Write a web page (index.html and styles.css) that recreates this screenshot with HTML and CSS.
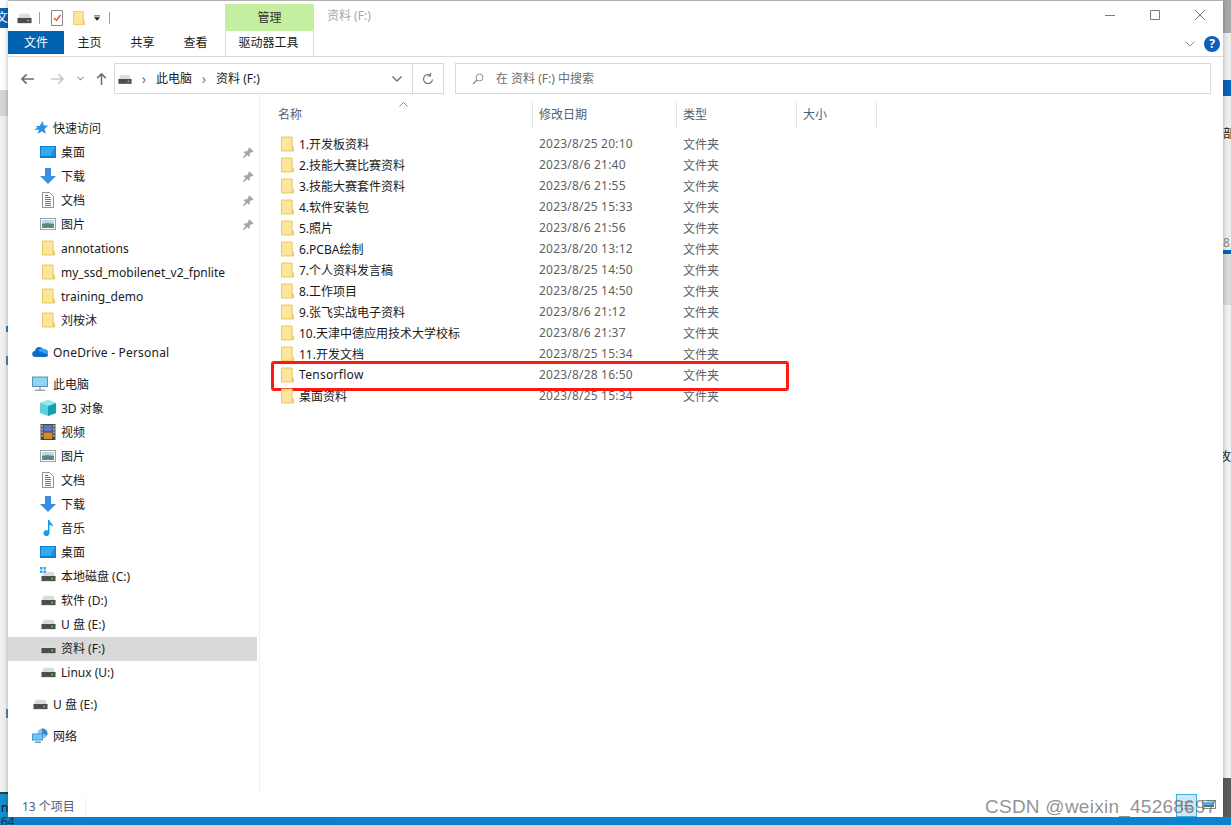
FILE: index.html
```html
<!DOCTYPE html>
<html lang="zh-CN">

<head>
    <meta charset="UTF-8">
    <title>资料 (F:)</title>
    <link rel="stylesheet" href="styles.css">
</head>

<body>
    <svg class="sprites" width="0" height="0">
        <symbol id="i-folder" viewBox="0 0 14 16">
            <path d="M.5.5h11.500v11h1.500v4H.5z" fill="#fde69b" stroke="#eac452"/>
            <path d="M12 11.500v4" stroke="#eac452"/>
        </symbol>
        <symbol id="i-drive" viewBox="0 0 16 12">
            <path d="M3 1.500h10l2.500 5.500H.5z" fill="#dcdcdc"/>
            <rect x=".5" y="6" width="15" height="5.500" fill="#4d4d4d"/>
            <rect x="11" y="8" width="2" height="1.500" fill="#5fe06a"/>
        </symbol>
        <symbol id="i-desktop" viewBox="0 0 16 12">
            <rect width="16" height="12" fill="#0a7fd6"/>
            <path d="M1 1h14v9H1z" fill="#39a7f0"/>
            <path d="M10 10l5-9v9z" fill="#1b8fe3"/>
        </symbol>
        <symbol id="i-down" viewBox="0 0 16 16">
            <path d="M5 0h6v8h5l-8 8-8-8h5z" fill="#3a8fe0"/>
        </symbol>
        <symbol id="i-doc" viewBox="0 0 12 16">
            <path d="M.5.5h7l4 4v11H.5z" fill="#fff" stroke="#8f8f8f"/>
            <path d="M6 3.500H3M8.500 5.500H3M9 7.500H3M9 9.500H3M9 11.500H3M9 13.500H3" stroke="#1f8fce"/>
        </symbol>
        <symbol id="i-pic" viewBox="0 0 16 12">
            <rect x=".5" y=".5" width="15" height="11" fill="#fff" stroke="#a0a0a0"/>
            <rect x="2" y="2" width="12" height="4" fill="#b9d6ee"/>
            <path d="M2 6l5-1 7 1v4H2z" fill="#5f8a78"/>
        </symbol>
        <symbol id="i-pin" viewBox="0 0 11 11">
            <path d="M6.500.5l4 4-1 1-1-.5-2 2 .3 2-1 .8-1.800-1.800L1 11 0 10l2.500-3L.8 5.300l.8-1 2 .3 2-2-.5-1z" fill="#9fa5ab"/>
        </symbol>
    </svg>

    <div class="edge edge-left">
        <span class="edge-tab">文</span>
        <span class="edge-mark mark-a"></span>
        <span class="edge-mark mark-b"></span>
        <span class="edge-mark mark-c"></span>
        <span class="edge-frag frag-n">n</span>
    </div>
    <div class="edge edge-right">
        <span class="edge-app"></span>
        <span class="edge-frag frag-bu">部</span>
        <span class="edge-frag frag-8">8</span>
        <span class="edge-frag frag-gong">攻</span>
    </div>

    <div class="window">
        <header class="titlebar">
            <div class="quick">
                <svg class="ic-drive"><use href="#i-drive"/></svg>
                <span class="quick-sep"></span>
                <svg class="ic-check" viewBox="0 0 12 16">
                    <path d="M.5.5h11v15H.5z" fill="#fff" stroke="#8a8a8a"/>
                    <path d="M3 8l2.500 2.500L9.500 5" fill="none" stroke="#e0552b" stroke-width="1.400"/>
                </svg>
                <svg class="ic-folder"><use href="#i-folder"/></svg>
                <svg class="ic-more" viewBox="0 0 8 6">
                    <path d="M0 0h7v1H0zM0 2h7L3.500 6z" fill="#222"/>
                </svg>
                <span class="quick-sep"></span>
            </div>
            <div class="tool-tab">管理</div>
            <div class="title">资料 (F:)</div>
            <div class="controls">
                <svg viewBox="0 0 10 10"><path d="M0 5.500h10" stroke="#7a7a7a"/></svg>
                <svg viewBox="0 0 10 10"><path d="M.5.500h9v9h-9z" fill="none" stroke="#7a7a7a"/></svg>
                <svg viewBox="0 0 10 10"><path d="M0 0l10 10M10 0L0 10" stroke="#7a7a7a"/></svg>
            </div>
        </header>

        <nav class="ribbon">
            <div class="rtab rtab-file">文件</div>
            <div class="rtab">主页</div>
            <div class="rtab">共享</div>
            <div class="rtab">查看</div>
            <div class="rtab rtab-tool">驱动器工具</div>
            <svg class="collapse" viewBox="0 0 10 6"><path d="M.5.500L5 5 9.500.500" fill="none" stroke="#8a8a8a"/></svg>
            <span class="help">?</span>
        </nav>

        <div class="addressbar">
            <div class="arrows">
                <svg viewBox="0 0 14 12"><path d="M6 1L1 6l5 5M1 6h13" fill="none" stroke="#6e6e6e" stroke-width="1.800"/></svg>
                <svg viewBox="0 0 14 12"><path d="M8 1l5 5-5 5M13 6H0" fill="none" stroke="#c8c8c8" stroke-width="1.800"/></svg>
                <svg class="small" viewBox="0 0 8 5"><path d="M.5.500L4 4 7.500.500" fill="none" stroke="#8a8a8a" stroke-width="1.200"/></svg>
                <svg viewBox="0 0 12 14"><path d="M1 6l5-5 5 5M6 1v13" fill="none" stroke="#6e6e6e" stroke-width="1.800"/></svg>
            </div>
            <div class="path">
                <svg class="ic-drive"><use href="#i-drive"/></svg>
                <span class="crumb-sep">›</span>
                <span class="crumb">此电脑</span>
                <span class="crumb-sep">›</span>
                <span class="crumb">资料 (F:)</span>
                <svg class="path-drop" viewBox="0 0 10 6"><path d="M.5.500L5 5 9.500.500" fill="none" stroke="#6e6e6e" stroke-width="1.400"/></svg>
                <span class="refresh">
                    <svg viewBox="0 0 12 12"><path d="M10.500 6.500A4.500 4.500 0 1 1 8.500 2.300M8.500 0v3h-3" fill="none" stroke="#6e6e6e" stroke-width="1.100"/></svg>
                </span>
            </div>
            <div class="search">
                <svg viewBox="0 0 12 12"><circle cx="7.500" cy="4.500" r="3.500" fill="none" stroke="#8a8a8a"/><path d="M5 7l-4 4" stroke="#8a8a8a" stroke-width="1.300"/></svg>
                <span class="crumb">在 资料 (F:) 中搜索</span>
            </div>
        </div>

        <div class="main">
            <aside class="sidebar">
                <div class="nav-row nav-top nav-first">
                    <svg class="nav-ic" viewBox="0 0 14 14"><path d="M8.500 0l1.300 4.500H14L10.500 8l1.300 5-3.800-2.800L3.500 13 5 8.500 0 9l3.500-2.500L1.500 5h4.200z" fill="#2f8fe0"/></svg>
                    <span>快速访问</span>
                </div>
                <div class="nav-row"><svg class="nav-ic wide"><use href="#i-desktop"/></svg><span class="grow">桌面</span><svg class="pin"><use href="#i-pin"/></svg></div>
                <div class="nav-row"><svg class="nav-ic"><use href="#i-down"/></svg><span class="grow">下载</span><svg class="pin"><use href="#i-pin"/></svg></div>
                <div class="nav-row"><svg class="nav-ic doc"><use href="#i-doc"/></svg><span class="grow">文档</span><svg class="pin"><use href="#i-pin"/></svg></div>
                <div class="nav-row"><svg class="nav-ic wide"><use href="#i-pic"/></svg><span class="grow">图片</span><svg class="pin"><use href="#i-pin"/></svg></div>
                <div class="nav-row"><svg class="nav-ic folder"><use href="#i-folder"/></svg><span>annotations</span></div>
                <div class="nav-row"><svg class="nav-ic folder"><use href="#i-folder"/></svg><span>my_ssd_mobilenet_v2_fpnlite</span></div>
                <div class="nav-row"><svg class="nav-ic folder"><use href="#i-folder"/></svg><span>training_demo</span></div>
                <div class="nav-row"><svg class="nav-ic folder"><use href="#i-folder"/></svg><span>刘桉沐</span></div>

                <div class="nav-row nav-top nav-gap">
                    <svg class="nav-ic" viewBox="0 0 16 10"><path d="M3.500 10a3 3 0 0 1-.5-6 4.500 4.500 0 0 1 8.500-1.500A3.800 3.800 0 0 1 16 7.500 2.500 2.500 0 0 1 13.500 10z" fill="#0f6cc4"/><path d="M6 3.500a4 4 0 0 1 5.500-1A3.800 3.800 0 0 1 16 7.500L9 5z" fill="#3aa0ea"/></svg>
                    <span class="spaced">OneDrive - Personal</span>
                </div>

                <div class="nav-row nav-top nav-gap">
                    <svg class="nav-ic" viewBox="0 0 16 15"><rect width="16" height="10.500" fill="#5f8fb5"/><rect x="1" y="1" width="14" height="8.500" fill="#8fd4f5"/><path d="M7 10.500h2V13H7z" fill="#b4bcc2"/><path d="M3 13h10v1.500H3z" fill="#9aa4ab"/></svg>
                    <span>此电脑</span>
                </div>
                <div class="nav-row">
                    <svg class="nav-ic" viewBox="0 0 16 16"><path d="M8 0l8 3v10l-8 3-8-3V3z" fill="#58d3dc"/><path d="M8 6v10l8-3V3z" fill="#159fb0"/><path d="M8 6L0 3l8-3 8 3z" fill="#93e6ea"/></svg>
                    <span>3D 对象</span>
                </div>
                <div class="nav-row">
                    <svg class="nav-ic" viewBox="0 0 14 15"><rect width="14" height="15" fill="#4a4a4a"/><rect x="3" y="1" width="8" height="6" fill="#5a7ac8"/><rect x="3" y="8" width="8" height="6" fill="#d88a2a"/><path d="M1 1h1v2H1zM1 4h1v2H1zM1 7h1v2H1zM1 10h1v2H1zM12 1h1v2h-1zM12 4h1v2h-1zM12 7h1v2h-1zM12 10h1v2h-1z" fill="#ddd"/></svg>
                    <span>视频</span>
                </div>
                <div class="nav-row"><svg class="nav-ic wide"><use href="#i-pic"/></svg><span>图片</span></div>
                <div class="nav-row"><svg class="nav-ic doc"><use href="#i-doc"/></svg><span>文档</span></div>
                <div class="nav-row"><svg class="nav-ic"><use href="#i-down"/></svg><span>下载</span></div>
                <div class="nav-row">
                    <svg class="nav-ic" viewBox="0 0 12 16"><path d="M6 0h1.500c.3 3 4 3.500 3 7C10 5.500 8.500 5 7.500 5v8a3 3 0 1 1-1.500-2.500z" fill="#1b9be8"/></svg>
                    <span>音乐</span>
                </div>
                <div class="nav-row"><svg class="nav-ic wide"><use href="#i-desktop"/></svg><span>桌面</span></div>
                <div class="nav-row">
                    <span class="sys-drive">
                        <svg class="win-flag" viewBox="0 0 6 6"><path d="M0 0h2.500v2.500H0zM3.500 0H6v2.500H3.500zM0 3.500h2.500V6H0zM3.500 3.500H6V6H3.500z" fill="#29a8ea"/></svg>
                        <svg class="nav-ic drive"><use href="#i-drive"/></svg>
                    </span>
                    <span>本地磁盘 (C:)</span>
                </div>
                <div class="nav-row"><svg class="nav-ic drive"><use href="#i-drive"/></svg><span>软件 (D:)</span></div>
                <div class="nav-row"><svg class="nav-ic drive"><use href="#i-drive"/></svg><span>U 盘 (E:)</span></div>
                <div class="nav-row selected"><svg class="nav-ic drive"><use href="#i-drive"/></svg><span>资料 (F:)</span></div>
                <div class="nav-row"><svg class="nav-ic drive"><use href="#i-drive"/></svg><span>Linux (U:)</span></div>

                <div class="nav-row nav-top nav-gap"><svg class="nav-ic drive"><use href="#i-drive"/></svg><span>U 盘 (E:)</span></div>
                <div class="nav-row nav-top nav-gap nav-net">
                    <svg class="nav-ic" viewBox="0 0 16 15"><circle cx="10.500" cy="5" r="5" fill="#8fc0e6"/><path d="M10 0a5 5 0 0 1 5 7l-5-2z" fill="#3f86c8"/><rect y="5" width="11" height="7" fill="#3d9ae0"/><rect x="1" y="6" width="9" height="5" fill="#74c3f2"/><path d="M3 13h6v1.500H3z" fill="#7a98b0"/></svg>
                    <span>网络</span>
                </div>
            </aside>

            <section class="files">
                <div class="file-head">
                    <svg class="sort" viewBox="0 0 9 5"><path d="M.5 4.500L4.500.500l4 4" fill="none" stroke="#8a8a8a"/></svg>
                    <div class="col-name">名称</div>
                    <div class="col-date">修改日期</div>
                    <div class="col-type">类型</div>
                    <div class="col-size">大小</div>
                </div>
                <div class="file-list">
                    <div class="file"><svg><use href="#i-folder"/></svg><span class="f-name">1.开发板资料</span><span class="f-date">2023/8/25 20:10</span><span class="f-type">文件夹</span></div>
                    <div class="file"><svg><use href="#i-folder"/></svg><span class="f-name">2.技能大赛比赛资料</span><span class="f-date">2023/8/6 21:40</span><span class="f-type">文件夹</span></div>
                    <div class="file"><svg><use href="#i-folder"/></svg><span class="f-name">3.技能大赛套件资料</span><span class="f-date">2023/8/6 21:55</span><span class="f-type">文件夹</span></div>
                    <div class="file"><svg><use href="#i-folder"/></svg><span class="f-name">4.软件安装包</span><span class="f-date">2023/8/25 15:33</span><span class="f-type">文件夹</span></div>
                    <div class="file"><svg><use href="#i-folder"/></svg><span class="f-name">5.照片</span><span class="f-date">2023/8/6 21:56</span><span class="f-type">文件夹</span></div>
                    <div class="file"><svg><use href="#i-folder"/></svg><span class="f-name">6.PCBA绘制</span><span class="f-date">2023/8/20 13:12</span><span class="f-type">文件夹</span></div>
                    <div class="file"><svg><use href="#i-folder"/></svg><span class="f-name">7.个人资料发言稿</span><span class="f-date">2023/8/25 14:50</span><span class="f-type">文件夹</span></div>
                    <div class="file"><svg><use href="#i-folder"/></svg><span class="f-name">8.工作项目</span><span class="f-date">2023/8/25 14:50</span><span class="f-type">文件夹</span></div>
                    <div class="file"><svg><use href="#i-folder"/></svg><span class="f-name">9.张飞实战电子资料</span><span class="f-date">2023/8/6 21:12</span><span class="f-type">文件夹</span></div>
                    <div class="file"><svg><use href="#i-folder"/></svg><span class="f-name">10.天津中德应用技术大学校标</span><span class="f-date">2023/8/6 21:37</span><span class="f-type">文件夹</span></div>
                    <div class="file"><svg><use href="#i-folder"/></svg><span class="f-name">11.开发文档</span><span class="f-date">2023/8/25 15:34</span><span class="f-type">文件夹</span></div>
                    <div class="file marked"><svg><use href="#i-folder"/></svg><span class="f-name">Tensorflow</span><span class="f-date">2023/8/28 16:50</span><span class="f-type">文件夹</span></div>
                    <div class="file"><svg><use href="#i-folder"/></svg><span class="f-name">桌面资料</span><span class="f-date">2023/8/25 15:34</span><span class="f-type">文件夹</span></div>
                </div>
            </section>
        </div>

        <footer class="statusbar">
            <span class="count">13 个项目</span>
            <span class="view-btn">
                <svg viewBox="0 0 11 9"><path d="M0 1h2M0 4.500h2M0 8h2" stroke="#c0453a"/><path d="M3.500 1H11M3.500 4.500H11M3.500 8H11" stroke="#777"/></svg>
            </span>
            <svg class="view-large" viewBox="0 0 14 9"><rect x=".5" y=".5" width="13" height="8" fill="#fff" stroke="#8a8a8a"/><rect x="2" y="2" width="10" height="3" fill="#5aaee8"/><rect x="2" y="5" width="10" height="2" fill="#4c7a58"/></svg>
        </footer>
    </div>

    <div class="taskbar"><span class="taskbar-frag">64</span></div>
    <div class="watermark">CSDN @weixin_45268697</div>
</body>

</html>
```

FILE: styles.css
```css
* {
    box-sizing: border-box;
    margin: 0;
    padding: 0;
    font-family: "Noto Sans", "Noto Sans CJK SC", sans-serif;
}

body {
    position: relative;
    width: 1231px;
    height: 825px;
    overflow: hidden;
    background: #c9c9c9;
    font-size: 12px;
    color: #1a1a1a;
}

.sprites {
    position: absolute;
}

svg {
    display: block;
    flex-shrink: 0;
}

/* bits of the desktop around the window */
.edge {
    position: absolute;
    top: 0;
    height: 825px;
    width: 8px;
    overflow: hidden;
}

.edge-left {
    left: 0;
    background: linear-gradient(to bottom, #fff 0, #fff 90px, #d6d6d6 90px, #d6d6d6 116px, #f0f0f0 116px, #f0f0f0 792px, #2d3a44 792px, #2d3a44 794px, #1590cf 794px);
}

.edge-tab {
    display: block;
    height: 20px;
    margin-top: 8px;
    background: #0b63b3;
    color: #fff;
    text-indent: -4px;
    overflow: hidden;
}

.edge-right {
    right: 0;
    background: linear-gradient(to bottom, #a9a9a9 0, #a9a9a9 33px, #eee 33px, #eee 250px, #0a63bd 250px, #0a63bd 254px, #dadada 254px, #dadada 305px, #f1f1f1 305px, #f1f1f1 778px, #5c5c5c 778px);
}

.edge-app {
    display: block;
    width: 8px;
    height: 16px;
    margin-top: 80px;
    background: #0a63bd;
}

.edge-mark {
    position: absolute;
    left: 6px;
    width: 2px;
    height: 6px;
    background: #2f7fc4;
}

.mark-a {
    top: 326px;
}

.mark-b {
    top: 356px;
    height: 9px;
    background: #4f86a8;
}

.mark-c {
    top: 709px;
    height: 9px;
    background: #4f86a8;
}

.edge-frag {
    position: absolute;
    left: 0;
    width: 8px;
    overflow: hidden;
    line-height: 16px;
}

.frag-n {
    top: 801px;
    line-height: 14px;
    text-indent: 1px;
}

.frag-bu {
    top: 126px;
}

.frag-8 {
    top: 235px;
    color: #888;
}

.frag-gong {
    top: 449px;
    text-indent: -4px;
}

.window {
    position: absolute;
    left: 8px;
    top: 1px;
    width: 1215px;
    height: 816px;
    display: flex;
    flex-direction: column;
    background: #fff;
    box-shadow: 0 0 5px rgba(0, 0, 0, 0.3);
}

.titlebar {
    display: flex;
    height: 30px;
    flex-shrink: 0;
}

.quick {
    display: flex;
    align-items: center;
    width: 217px;
    padding: 3px 0 0 9px;
}

.ic-drive {
    width: 15px;
    height: 12px;
}

.quick-sep {
    width: 1px;
    height: 12px;
    margin: 0 11px 0 7px;
    background: #a0a0a0;
}

.ic-check {
    width: 12px;
    height: 16px;
    margin-right: 10px;
}

.ic-folder {
    width: 12px;
    height: 16px;
    margin-right: 9px;
}

.ic-more {
    width: 7px;
    height: 6px;
    margin-right: 1px;
}

.tool-tab {
    width: 89px;
    margin-top: 3px;
    line-height: 27px;
    text-align: center;
    background: #c4efa0;
    color: #333;
}

.title {
    flex: 1;
    padding: 5px 0 0 13px;
    color: #a8a8a8;
}

.controls {
    display: flex;
    gap: 35px;
    padding: 9px 18px 0 0;
}

.controls svg {
    width: 10px;
    height: 10px;
}

.ribbon {
    display: flex;
    height: 26px;
    flex-shrink: 0;
    align-items: flex-start;
    border-bottom: 1px solid #dadada;
}

.rtab {
    width: 53px;
    height: 23px;
    line-height: 24px;
    text-align: center;
}

.rtab-file {
    width: 56px;
    margin-right: -1px;
    background: #0063b1;
    color: #fff;
}

.rtab-tool {
    width: 89px;
    margin-left: 3px;
    padding-right: 2px;
    height: 25px;
    background: #fff;
    border-left: 1px solid #dadada;
    border-right: 1px solid #dadada;
}

.collapse {
    width: 10px;
    height: 6px;
    margin: 10px 0 0 871px;
}

.help {
    width: 16px;
    height: 16px;
    margin: 5px 0 0 9px;
    border-radius: 50%;
    background: #0a62b8;
    color: #fff;
    font-size: 12px;
    font-weight: 700;
    line-height: 16px;
    text-align: center;
}

.addressbar {
    display: flex;
    align-items: center;
    height: 31px;
    margin-top: 6px;
    flex-shrink: 0;
}

.arrows {
    display: flex;
    align-items: center;
    width: 106px;
    padding-left: 13px;
    gap: 17px;
}

.arrows svg {
    width: 13px;
    height: 12px;
}

.arrows svg.small {
    width: 7px;
    height: 5px;
    margin: 0 -6px 0 -4px;
}

.path {
    display: flex;
    align-items: center;
    width: 330px;
    height: 31px;
    padding-left: 3px;
    border: 1px solid #d9d9d9;
}

.path .ic-drive {
    width: 14px;
}

.crumb {
    padding-bottom: 2px;
}

.path .crumb-sep {
    width: 24px;
    color: #777;
    font-size: 14px;
    text-align: center;
}

.path-drop {
    width: 10px;
    height: 6px;
    margin-left: auto;
    margin-right: 10px;
}

.refresh {
    display: flex;
    align-items: center;
    justify-content: center;
    width: 31px;
    height: 29px;
    border-left: 1px solid #d9d9d9;
}

.refresh svg {
    width: 12px;
    height: 12px;
}

.search {
    display: flex;
    align-items: center;
    gap: 12px;
    width: 756px;
    height: 31px;
    margin-left: 11px;
    padding-left: 16px;
    border: 1px solid #d9d9d9;
    color: #6d6d6d;
}

.search svg {
    width: 12px;
    height: 12px;
}

.main {
    display: flex;
    flex: 1;
    min-height: 0;
}

.sidebar {
    width: 252px;
    padding: 22px 0 0;
    border-right: 1px solid #f0f0f0;
}

.nav-row {
    display: flex;
    align-items: center;
    height: 24px;
    width: 249px;
    padding: 0 3px 0 32px;
}

.nav-top {
    padding-left: 24px;
}

.nav-first .nav-ic {
    margin-left: 2px;
    margin-right: 5px;
    width: 14px;
    height: 14px;
}

.nav-gap {
    margin-top: 8px;
}

.spaced {
    letter-spacing: 0.2px;
}

.selected {
    background: linear-gradient(to bottom, #fff 1px, #d9d9d9 1px);
    box-shadow: 0 1px 0 #d9d9d9;
}

.nav-ic {
    width: 16px;
    height: 16px;
    margin-right: 5px;
}

.nav-ic.wide {
    height: 12px;
}

.nav-ic.doc {
    width: 12px;
    padding: 0;
    margin: 0 7px 0 2px;
}

.nav-ic.folder {
    width: 13px;
    height: 16px;
    margin: 0 6px 0 2px;
}

.nav-ic.drive {
    width: 15px;
    height: 12px;
    margin: 0 5px 0 1px;
}

.sys-drive {
    position: relative;
    display: block;
}

.win-flag {
    position: absolute;
    left: 0;
    top: -3px;
    width: 6px;
    height: 6px;
}

.grow {
    flex: 1;
}

.pin {
    width: 11px;
    height: 11px;
}

.files {
    flex: 1;
}

.file-head {
    position: relative;
    display: flex;
    height: 27px;
    margin-top: 7px;
    line-height: 27px;
    color: #4c607a;
}

.file-head > div {
    height: 27px;
    padding-left: 5px;
    border-right: 1px solid #e5e5e5;
}

.sort {
    position: absolute;
    left: 139px;
    top: 1px;
    width: 9px;
    height: 5px;
}

.col-name {
    width: 273px;
    padding-left: 18px !important;
}

.col-date {
    width: 144px;
    padding-left: 6px !important;
}

.col-type {
    width: 120px;
    padding-left: 6px !important;
}

.col-size {
    width: 80px;
    padding-left: 6px !important;
}

.file-list {
    padding-top: 5px;
}

.file {
    position: relative;
    display: flex;
    align-items: center;
    height: 21px;
    padding-left: 21px;
}

.file svg {
    width: 13px;
    height: 16px;
    margin-right: 5px;
}

.f-name {
    width: 240px;
}

.f-date {
    width: 144px;
    color: #5f5f5f;
    letter-spacing: 0.2px;
}

.f-type {
    color: #5f5f5f;
}

.marked .f-name {
    letter-spacing: 0.3px;
}

/* red box somebody drew on the screenshot */
.marked::after {
    content: "";
    position: absolute;
    box-sizing: border-box;
    left: 11px;
    top: -3px;
    width: 518px;
    height: 30px;
    border: 3px solid #ff1a10;
    border-radius: 3px;
}

.statusbar {
    position: relative;
    display: flex;
    align-items: center;
    height: 23px;
    flex-shrink: 0;
    padding-left: 14px;
    color: #4c607a;
}

.count {
    padding-right: 10px;
    border-right: 1px solid #f0f0f0;
}

.view-btn {
    position: absolute;
    left: 1168px;
    top: 0;
    display: flex;
    align-items: center;
    justify-content: center;
    width: 21px;
    height: 23px;
    background: #cce8f7;
    border: 1px solid #3fb0e4;
}

.view-btn svg {
    width: 11px;
    height: 9px;
}

.view-large {
    position: absolute;
    left: 1194px;
    top: 6px;
    width: 14px;
    height: 9px;
}

.taskbar {
    position: absolute;
    left: 0;
    bottom: 0;
    width: 1231px;
    height: 8px;
    overflow: hidden;
    background: linear-gradient(to right, #0a7fc8, #0a84d0);
}

.taskbar-frag {
    display: block;
    padding-left: 1px;
    line-height: 10px;
    color: #12324a;
}

.watermark {
    position: absolute;
    left: 985px;
    top: 796px;
    font-family: "Liberation Sans", sans-serif;
    font-size: 19px;
    letter-spacing: 0.25px;
    line-height: 22px;
    color: rgba(110, 110, 110, 0.75);
}
```
